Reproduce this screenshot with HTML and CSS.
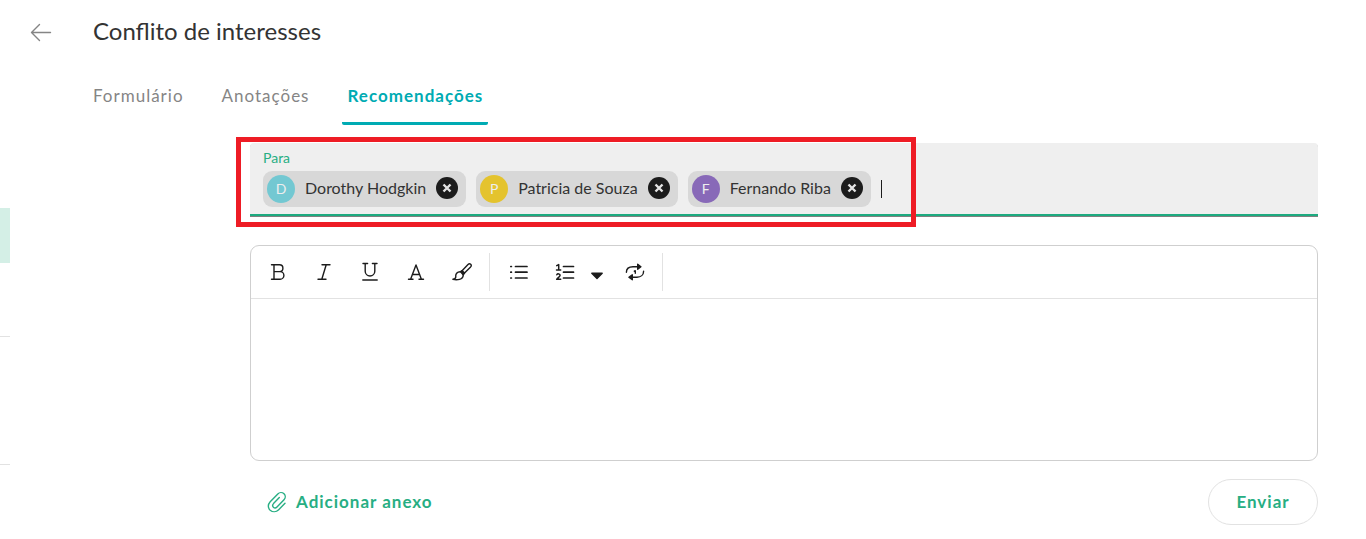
FILE: index.html
```html
<!DOCTYPE html>
<html lang="pt-BR">
<head>
  <meta charset="UTF-8">
  <meta name="viewport" content="width=device-width, initial-scale=1">
  <title>Conflito de interesses</title>
  <link rel="stylesheet" href="styles.css">
</head>
<body>
  <div class="page">
    <aside class="side-list">
      <div class="side-item active"></div>
      <div class="side-item"></div>
      <div class="side-item tall"></div>
    </aside>

    <main class="content">
      <header class="header">
        <button type="button" class="back" aria-label="Voltar">
          <svg width="22" height="20" viewBox="0 0 22 20" fill="none" stroke="#858585" stroke-width="1.4" stroke-linecap="round" stroke-linejoin="round">
            <path d="M20.5 10.5H1.5M9.5 2.5L1.5 10.5l8 8"/>
          </svg>
        </button>
        <h1>Conflito de interesses</h1>
      </header>

      <nav class="tabs">
        <a href="#formulario">Formulário</a>
        <a href="#anotacoes">Anotações</a>
        <a href="#recomendacoes" class="active">Recomendações</a>
      </nav>

      <form class="message">
        <div class="recipients">
          <label for="para">Para</label>
          <div class="chips">
            <div class="chip">
              <span class="avatar blue">D</span>
              <span class="name">Dorothy Hodgkin</span>
              <button type="button" class="remove" aria-label="Remover Dorothy Hodgkin">
                <svg width="10" height="10" viewBox="0 0 10 10" stroke="#e4e4e4" stroke-width="2.4"><path d="M1.5 1.5l7 7M8.5 1.5l-7 7"/></svg>
              </button>
            </div>
            <div class="chip">
              <span class="avatar yellow">P</span>
              <span class="name">Patricia de Souza</span>
              <button type="button" class="remove" aria-label="Remover Patricia de Souza">
                <svg width="10" height="10" viewBox="0 0 10 10" stroke="#e4e4e4" stroke-width="2.4"><path d="M1.5 1.5l7 7M8.5 1.5l-7 7"/></svg>
              </button>
            </div>
            <div class="chip">
              <span class="avatar purple">F</span>
              <span class="name">Fernando Riba</span>
              <button type="button" class="remove" aria-label="Remover Fernando Riba">
                <svg width="10" height="10" viewBox="0 0 10 10" stroke="#e4e4e4" stroke-width="2.4"><path d="M1.5 1.5l7 7M8.5 1.5l-7 7"/></svg>
              </button>
            </div>
            <input type="text" id="para">
          </div>
          <div class="highlight"></div>
        </div>

        <div class="editor">
          <div class="toolbar">
            <div class="group">
              <button type="button" aria-label="Negrito">
                <svg width="20" height="20" viewBox="0 0 20 20"><path d="M3.5 2.8h8a3.4 3.4 0 0 1 0 6.8H6M3.5 17.2h8.6a3.8 3.8 0 0 0 0-7.6M6 2.8v14.4"/></svg>
              </button>
              <button type="button" aria-label="Itálico">
                <svg width="20" height="20" viewBox="0 0 20 20"><path d="M8 2.8h8M4 17.2h8M12.2 2.8L7.8 17.2"/></svg>
              </button>
              <button type="button" aria-label="Sublinhado">
                <svg width="20" height="20" viewBox="0 0 20 20"><path d="M3 1.5h4.6M12.4 1.5H17M5.2 1.5v7.7a4.8 4.8 0 0 0 9.6 0V1.5M2.8 18h14.4"/></svg>
              </button>
              <button type="button" aria-label="Cor do texto">
                <svg width="20" height="20" viewBox="0 0 20 20"><path d="M2.5 17.2H7M13 17.2h4.5M4.6 17.2L10 3l5.4 14.2M6.3 12.5h7.4"/></svg>
              </button>
              <button type="button" aria-label="Pincel">
                <svg width="20" height="20" viewBox="0 0 20 20"><path d="M9.6 9.3l6.4-6.8c1.9-1.8 4.3.5 2.6 2.4l-6.6 6.7M8.4 9.7c-3.5 0-5 2.4-4.6 5 0 1.6-1 2.4-2.9 2.6 3.4.9 10.9.8 10.3-5"/><path d="M8.4 9.6l1.8-.9 2.3 2.4-1.3 1.8z" fill="#1c1c1c"/></svg>
              </button>
            </div>
            <div class="group lists">
              <button type="button" aria-label="Lista">
                <svg width="20" height="20" viewBox="0 0 20 20"><path d="M6.5 4.5H18M6.5 10.2H18M6.5 16H18" stroke-width="1.7"/><path d="M1.8 4.5h.6M1.8 10.2h.6M1.8 16h.6" stroke-width="1.7"/></svg>
              </button>
              <button type="button" aria-label="Lista numerada">
                <svg width="20" height="20" viewBox="0 0 20 20"><path d="M8.5 4.5h10M8.5 10.2h10M8.5 16h10" stroke-width="1.7"/><path d="M1.7 3.6l2-1v5.2M1.5 8h4.2M1.8 12.8c.7-1.5 3.3-1.1 3.3.5 0 1.3-2.4 2.5-3.4 4h4" stroke-width="1.5"/></svg>
              </button>
              <button type="button" class="caret" aria-label="Opções de lista">
                <svg width="14" height="20" viewBox="0 0 14 20"><path d="M1.8 11.2h10.4L7 16.5z" fill="#1c1c1c"/></svg>
              </button>
              <button type="button" aria-label="Inserir variável">
                <svg width="20" height="20" viewBox="0 0 20 20"><path d="M1.4 10.2C1.4 6.5 4.2 4.7 8 4.7h5M18.6 9.2c0 3.7-2.8 6-6.6 6H7"/><path d="M12.7 2.2v5l3.2-2.5zM7.3 12.8v5l-3.4-2.5z" fill="#1c1c1c"/><path d="M9.3 9.2l1-.5v2.6"/></svg>
              </button>
            </div>
          </div>
          <textarea aria-label="Mensagem"></textarea>
        </div>

        <div class="actions">
          <button type="button" class="attach">
            <svg width="20" height="22" viewBox="0 0 20 22" fill="none" stroke="#27ae83" stroke-width="1.4" stroke-linecap="round" stroke-linejoin="round">
              <path d="M18 12.3l-6.3 6.4c-2.6 2.6-6.2 2.4-8.5.5-2.4-2.2-2.6-5.7 0-8.5l7.6-7.8c1.7-1.7 4.5-1.7 6.2-.1 1.7 1.7 1.6 4.3 0 6l-7 7.2c-1.1 1.1-2.6 1.1-3.6.2-1-1-.9-2.5.1-3.6l5.8-6"/>
            </svg>
            <span>Adicionar anexo</span>
          </button>
          <button type="submit" class="send">Enviar</button>
        </div>
      </form>
    </main>
  </div>
</body>
</html>
```
FILE: styles.css
```css
* {
  box-sizing: border-box;
}
body {
  margin: 0;
  background: #fff;
  color: #333;
  font-family: Lato, "Liberation Sans", sans-serif;
  font-size: 16px;
}
button {
  padding: 0;
  border: none;
  background: none;
  font: inherit;
  cursor: pointer;
}
svg {
  display: block;
}
.page {
  display: flex;
}

/* edge of the list on the left */
.side-list {
  width: 10px;
  padding-top: 208px;
}
.side-item {
  height: 74px;
  border-bottom: 1px solid #e2e2e2;
}
.side-item.active {
  height: 55px;
  border: none;
  background: #d4efe6;
}
.side-item.tall {
  height: 128px;
}

.content {
  flex: 1;
  padding: 16px 48px 14px 20px;
}
.header {
  display: flex;
  align-items: center;
  gap: 41px;
  height: 32px;
}
h1 {
  margin: 0;
  padding-bottom: 2px;
  font-size: 24px;
  font-weight: 400;
  line-height: 30px;
}

.tabs {
  display: flex;
  gap: 28px;
  margin: 22px 0 18px 58px;
}
.tabs a {
  padding: 15px 5px 16px;
  border-bottom: 3px solid transparent;
  border-radius: 2px;
  color: #858585;
  font-size: 17px;
  line-height: 21px;
  letter-spacing: 1px;
  text-decoration: none;
}
.tabs a.active {
  border-color: #00abb3;
  color: #00abb3;
  font-weight: 700;
}

.message {
  margin-left: 220px;
}
.recipients {
  position: relative;
  height: 73px;
  padding: 5px 13px 0;
  border-bottom: 2px solid #1dab80;
  border-radius: 4px 4px 0 0;
  background: #efefef;
  box-shadow: 0 1px #808080;
}
.recipients label {
  display: block;
  color: #27ae83;
  font-size: 14px;
  line-height: 20px;
}
.chips {
  display: flex;
  align-items: center;
  gap: 10px;
  margin-top: 3px;
}
.chip {
  display: flex;
  align-items: center;
  height: 36px;
  padding: 0 8px 0 4px;
  border-radius: 9px;
  background: #d8d8d8;
}
.avatar {
  width: 28px;
  height: 28px;
  border-radius: 50%;
  color: #eee;
  font-size: 14px;
  line-height: 28px;
  text-align: center;
}
.blue {
  background: #73c8d2;
}
.yellow {
  background: #e4c32e;
}
.purple {
  background: #8869b8;
}
.name {
  margin: 0 10px;
  padding-bottom: 3px;
}
.remove {
  display: flex;
  align-items: center;
  justify-content: center;
  width: 22px;
  height: 22px;
  margin-bottom: 2px;
  border-radius: 50%;
  background: #1c1c1c;
}
.chips input {
  flex: 1;
  min-width: 20px;
  height: 18px;
  border: none;
  border-left: 1px solid #1c1c1c;
  outline: none;
  background: none;
  font: inherit;
}
.highlight {
  position: absolute;
  top: -6px;
  left: -14px;
  width: 680px;
  height: 90px;
  border: 5px solid #ee1c25;
  pointer-events: none;
}

.editor {
  margin-top: 29px;
  border: 1px solid #cfcfcf;
  border-radius: 9px;
}
.toolbar {
  display: flex;
  align-items: center;
  height: 53px;
  border-bottom: 1px solid #e2e2e2;
}
.group {
  display: flex;
  align-items: center;
  gap: 26px;
  height: 38px;
  padding: 0 17px;
  border-right: 1px solid #e2e2e2;
}
.lists {
  padding: 0 17px 0 19px;
}
.toolbar svg {
  fill: none;
  stroke: #1c1c1c;
  stroke-width: 1.4;
  stroke-linecap: round;
  stroke-linejoin: round;
}
.caret {
  margin: 0 -5px 0 -11px;
}
textarea {
  display: block;
  width: 100%;
  height: 161px;
  padding: 16px;
  border: none;
  outline: none;
  background: none;
  font: inherit;
  resize: none;
}

.actions {
  display: flex;
  align-items: center;
  justify-content: space-between;
  margin-top: 18px;
}
.attach,
.send {
  color: #27ae83;
  font-size: 17px;
  font-weight: 700;
  letter-spacing: 1px;
}
.attach {
  display: flex;
  align-items: center;
  gap: 9px;
  margin-left: 17px;
}
.attach span {
  padding-bottom: 2px;
}
.send {
  width: 110px;
  height: 46px;
  padding-bottom: 2px;
  border: 1px solid #e2e2e2;
  border-radius: 23px;
}
```
